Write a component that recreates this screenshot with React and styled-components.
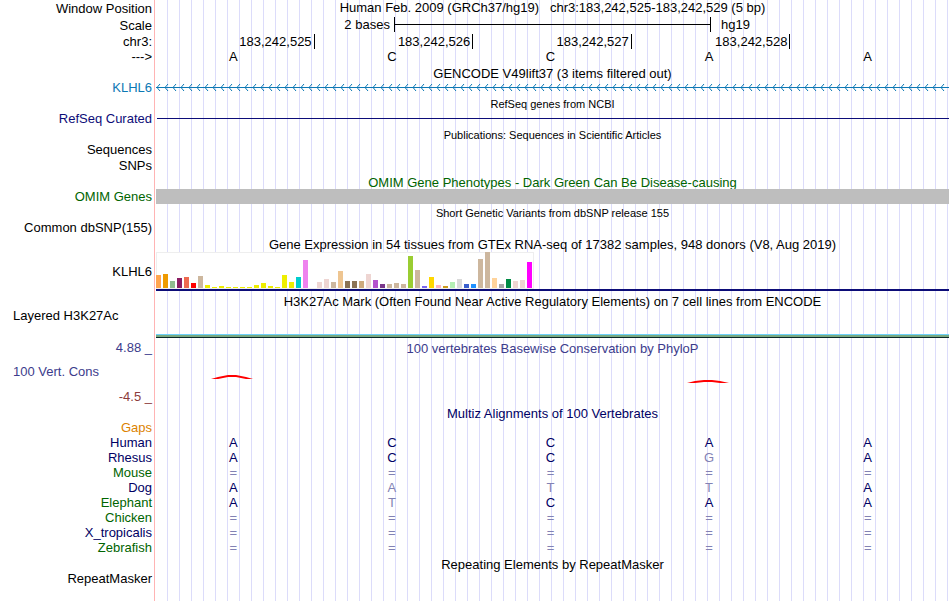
import React from 'react'
import styled, { createGlobalStyle } from 'styled-components'

const GlobalStyle = createGlobalStyle`
    body {
        margin: 0;
        background-color: white;
    }
`

const tan = '#cdb79e'
const pink = '#eed5d2'
const yellow = '#eeee00'

// median expression per tissue, in GTEx order
const tissues = [
    [13, '#ffa54f'], [14, '#ee9a00'], [7, '#8fbc8f'], [10, '#8b1c62'], [11, '#ee6a50'], [5, '#ff0000'],
    [12, tan], [3, yellow], [1, yellow], [2, yellow], [1, yellow], [1, yellow], [1, yellow], [1, yellow],
    [3, yellow], [5, yellow], [2, yellow], [1, yellow], [13, yellow], [6, yellow], [11, '#00cdcd'],
    [28, '#ee82ee'], [0, '#9ac0cd'], [6, pink], [9, pink], [6, tan], [17, '#eec591'], [7, '#8b7355'],
    [7, '#8b7355'], [7, '#cdaa7d'], [14, pink], [8, '#b452cd'], [4, '#7a378b'], [4, tan], [5, tan],
    [4, tan], [32, '#9acd32'], [18, tan], [2, '#7a67ee'], [11, '#ffd700'], [3, '#ffb6c1'], [2, '#cd9b1d'],
    [6, '#b4eeb4'], [9, '#d9d9d9'], [4, '#3a5fcd'], [4, '#1e90ff'], [29, tan], [36, tan], [10, '#ffd39b'],
    [4, '#a6a6a6'], [9, '#008b45'], [7, pink], [8, pink], [26, '#ff00ff'],
]

const alignments = [
    { name: 'Human', color: '#000064', bases: 'ACCAA' },
    { name: 'Rhesus', color: '#000064', bases: 'ACCGA' },
    { name: 'Mouse', color: '#006400', bases: '=====' },
    { name: 'Dog', color: '#000064', bases: 'AATTA' },
    { name: 'Elephant', color: '#006400', bases: 'ATCAA' },
    { name: 'Chicken', color: '#006400', bases: '=====' },
    { name: 'X_tropicalis', color: '#000064', bases: '=====' },
    { name: 'Zebrafish', color: '#006400', bases: '=====' },
]

const sequence = 'ACCAA'
const positions = ['183,242,525', '183,242,526', '183,242,527', '183,242,528']

const TrackTitle = ({ children, color, small }) => (
    <Row>
        <Label />
        <Title $color={color} $small={small}>{children}</Title>
    </Row>
)

const App = () => {

    return (
        <Browser>
            <GlobalStyle />
            <Row $height={17}>
                <Label>Window Position</Label>
                <Position>Human Feb. 2009 (GRCh37/hg19)   chr3:183,242,525-183,242,529 (5 bp)</Position>
            </Row>
            <Row $height={17}>
                <Label>Scale</Label>
                <Scale>
                    <span>2 bases</span>
                    <ScaleBar />
                    <span>hg19</span>
                </Scale>
            </Row>
            <Row>
                <Label>chr3:</Label>
                <Ruler>
                    {positions.map(p => <Tick key={p}>{p}</Tick>)}
                </Ruler>
            </Row>
            <Row>
                <Label>---&gt;</Label>
                <Bases>
                    {sequence.split('').map((b, i) => <span key={i}>{b}</span>)}
                </Bases>
            </Row>

            <TrackTitle>GENCODE V49lift37 (3 items filtered out)</TrackTitle>
            <Row>
                <Label $color='#0c78b4'>KLHL6</Label>
                <Intron width='100%' height='15'>
                    <defs>
                        <pattern id='strand' width='8' height='15' patternUnits='userSpaceOnUse'>
                            <path d='M4 4 L1 7.5 L4 11' fill='none' stroke='#0c78b4' />
                        </pattern>
                    </defs>
                    <rect width='100%' height='15' fill='url(#strand)' />
                    <rect y='7' width='100%' height='1' fill='#0c78b4' />
                </Intron>
            </Row>

            <TrackTitle small>RefSeq genes from NCBI</TrackTitle>
            <Row>
                <Label $color='#0c0c78'>RefSeq Curated</Label>
                <GeneLine />
            </Row>

            <TrackTitle small>Publications: Sequences in Scientific Articles</TrackTitle>
            <Row>
                <Label>Sequences</Label>
            </Row>
            <Row $height={16}>
                <Label>SNPs</Label>
            </Row>

            <TrackTitle color='#006400'>OMIM Gene Phenotypes - Dark Green Can Be Disease-causing</TrackTitle>
            <Row>
                <Label $color='#006400'>OMIM Genes</Label>
                <GeneBlock />
            </Row>

            <TrackTitle small>Short Genetic Variants from dbSNP release 155</TrackTitle>
            <Row>
                <Label>Common dbSNP(155)</Label>
            </Row>

            <TrackTitle>Gene Expression in 54 tissues from GTEx RNA-seq of 17382 samples, 948 donors (V8, Aug 2019)</TrackTitle>
            <Row $height={41}>
                <Label>KLHL6</Label>
                <Expression>
                    <svg width='378' height='37'>
                        <rect width='378' height='37' fill='#eeeeee' />
                        <rect x='1' y='1' width='376' height='35' fill='white' />
                        {tissues.map(([value, color], i) => (
                            <rect key={i} x={i * 7} y={36 - value} width='5' height={value} fill={color} />
                        ))}
                    </svg>
                </Expression>
            </Row>

            <TrackTitle>H3K27Ac Mark (Often Found Near Active Regulatory Elements) on 7 cell lines from ENCODE</TrackTitle>
            <Row $height={31}>
                <SideLabels>
                    <SideName>Layered H3K27Ac</SideName>
                </SideLabels>
                <Signal />
            </Row>

            <Row>
                <Label $color='#3c3c8c'>4.88 _</Label>
                <Title $color='#3c3c8c'>100 vertebrates Basewise Conservation by PhyloP</Title>
            </Row>
            <Row $height={49}>
                <SideLabels $end>
                    <SideName $color='#3c3c8c'>100 Vert. Cons</SideName>
                    <Label $color='#8c3c3c'>-4.5 _</Label>
                </SideLabels>
                <svg width='100%' height='49' viewBox='0 0 793 49' preserveAspectRatio='none'>
                    <g fill='red'>
                        <path d='M55 24 L62 22 L72 20 H80 L90 22 L97 24 H90 L80 22 H72 L62 24 Z' />
                        <path d='M531 28 L539 26 L548 25 H556 L564 26 L573 28 H564 L556 27 H548 L539 28 Z' />
                    </g>
                </svg>
            </Row>

            <TrackTitle color='#000064'>Multiz Alignments of 100 Vertebrates</TrackTitle>
            <Row>
                <Label $color='#dc8200'>Gaps</Label>
            </Row>
            <Alignment>
                <tbody>
                    {alignments.map(({ name, color, bases }) => (
                        <tr key={name}>
                            <Species scope='row' $color={color}>{name}</Species>
                            {bases.split('').map((b, i) => (
                                <Base key={i} $differs={b !== sequence[i]}>{b}</Base>
                            ))}
                        </tr>
                    ))}
                </tbody>
            </Alignment>

            <TrackTitle>Repeating Elements by RepeatMasker</TrackTitle>
            <Row>
                <Label>RepeatMasker</Label>
            </Row>
        </Browser>
    )
}

const Browser = styled.main`
    box-sizing: border-box;
    min-height: 100vh;
    padding-right: 1px;
    font-family: 'Liberation Sans', Arial, sans-serif;
    font-size: 13px;
    line-height: 15px;
    color: black;
    /* label edge, blank label area, guide lines */
    background:
        linear-gradient(#ffb4b4, #ffb4b4) 154px 0 / 1px 100% no-repeat,
        linear-gradient(white, white) 0 0 / 156px 100% no-repeat,
        linear-gradient(90deg, #dcdcfa 1px, transparent 1px) 155px 0 / 12px 100%;
`

const Row = styled.div`
    display: grid;
    grid-template-columns: 156px minmax(0, 1fr);
    align-items: center;
    min-height: ${props => props.$height || 15}px;
`

const Label = styled.div`
    padding-right: 4px;
    text-align: right;
    white-space: nowrap;
    color: ${props => props.$color || 'black'};
`

const Title = styled.div`
    padding-top: 3px;
    line-height: 13px;
    text-align: center;
    white-space: nowrap;
    font-size: ${props => props.$small ? 11 : 13}px;
    color: ${props => props.$color || 'black'};
`

const Position = styled.div`
    align-self: start;
    text-align: center;
    white-space: pre;
`

const Scale = styled.div`
    display: grid;
    grid-template-columns: 3fr 4fr 3fr;
    align-self: start;

    span:first-child {
        padding-right: 4px;
        text-align: right;
    }
    span:last-child {
        padding-left: 10px;
    }
`

const ScaleBar = styled.div`
    border: solid black;
    border-width: 0 1px;
    background: linear-gradient(black, black) center / 100% 1px no-repeat;
`

const Ruler = styled.div`
    display: grid;
    grid-template-columns: repeat(5, 1fr);
`

const Tick = styled.div`
    padding-right: 2px;
    border-right: 1px solid black;
    text-align: right;
`

const Bases = styled.div`
    display: grid;
    grid-template-columns: repeat(5, 1fr);
    text-align: center;

    span {
        padding-right: 4px;
    }
`

const Intron = styled.svg`
    display: block;
`

const GeneLine = styled.div`
    height: 1px;
    margin-left: 1px;
    background-color: #0c0c78;
`

const GeneBlock = styled.div`
    height: 15px;
    background-color: #bebebe;
`

const Expression = styled.div`
    align-self: end;
    margin-bottom: 1px;
    border-bottom: 2px solid #0c0c78;

    svg {
        display: block;
    }
`

const Signal = styled.div`
    align-self: end;
    height: 2px;
    margin-bottom: 1px;
    border-top: 1px solid #6ed2fa;
    border-bottom: 1px solid #0a2828;
    background-color: #78aa82;
`

const SideLabels = styled.div`
    display: flex;
    flex-direction: column;
    align-self: stretch;
    justify-content: ${props => props.$end ? 'flex-end' : 'flex-start'};
    gap: 10px;
`

const SideName = styled.div`
    padding-left: 13px;
    color: ${props => props.$color || 'black'};
`

const Alignment = styled.table`
    width: 100%;
    table-layout: fixed;
    border-collapse: collapse;
`

const Species = styled.th`
    width: 152px;
    padding: 0 4px 0 0;
    font-weight: normal;
    text-align: right;
    color: ${props => props.$color};
`

const Base = styled.td`
    padding: 0 4px 0 0;
    text-align: center;
    color: ${props => props.$differs ? '#8282b4' : '#000064'};
`

export default App
